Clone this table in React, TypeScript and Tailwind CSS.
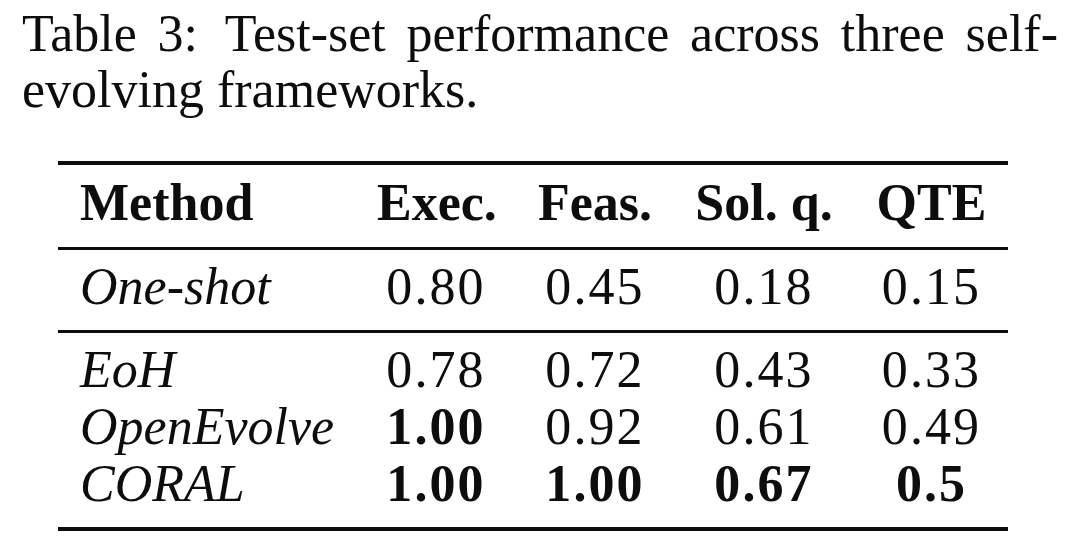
const serif = "font-['Liberation_Serif','Times_New_Roman',serif]"

type Cell = { v: string; b?: boolean }
type Row = { name: string; cells: Cell[] }

const baseline: Row[] = [
  { name: 'One-shot', cells: [{ v: '0.80' }, { v: '0.45' }, { v: '0.18' }, { v: '0.15' }] },
]

const evolving: Row[] = [
  { name: 'EoH', cells: [{ v: '0.78' }, { v: '0.72' }, { v: '0.43' }, { v: '0.33' }] },
  { name: 'OpenEvolve', cells: [{ v: '1.00', b: true }, { v: '0.92' }, { v: '0.61' }, { v: '0.49' }] },
  { name: 'CORAL', cells: [{ v: '1.00', b: true }, { v: '1.00', b: true }, { v: '0.67', b: true }, { v: '0.5', b: true }] },
]

const grid = 'grid grid-cols-[256px_118px_118px_138px_115px] gap-x-[41px] pl-[22px] pr-[19px]'

function DataRow({ row }: { row: Row }) {
  return (
    <div className={`${grid} h-[57px] leading-[57px]`}>
      <div className="italic">{row.name}</div>
      {row.cells.map((c, i) => (
        <div key={i} className={`text-center tracking-[0.04em] ${c.b ? 'font-bold' : ''}`}>
          {c.v}
        </div>
      ))}
    </div>
  )
}

export default function App() {
  return (
    <div className={`w-[1080px] h-[552px] bg-white text-[#0d0d0d] overflow-hidden ${serif} text-[52px]`}>
      {/* caption */}
      <div className="pt-[6px] pl-[22px] w-[1058px] leading-[56px]">
        <div className="text-justify [text-align-last:justify] whitespace-nowrap flex justify-between">
          <span>Table</span>
          <span>3:</span>
          <span className="ml-[6px]">Test-set</span>
          <span>performance</span>
          <span>across</span>
          <span>three</span>
          <span>self-</span>
        </div>
        <div>evolving frameworks.</div>
      </div>

      {/* table */}
      <div className="mt-[43px] ml-[58px] w-[950px]">
        <div className="h-[4px] bg-[#0d0d0d]" />
        <div className={`${grid} h-[57px] leading-[57px] font-bold mt-[9px] mb-[16px]`}>
          <div>Method</div>
          <div className="text-center">Exec.</div>
          <div className="text-center">Feas.</div>
          <div className="text-center">Sol. q.</div>
          <div className="text-center">QTE</div>
        </div>
        <div className="h-[3px] bg-[#0d0d0d]" />
        <div className="pt-[8px] pb-[15px]">
          {baseline.map((r) => (
            <DataRow key={r.name} row={r} />
          ))}
        </div>
        <div className="h-[3px] bg-[#0d0d0d]" />
        <div className="pt-[8px] pb-[15px]">
          {evolving.map((r) => (
            <DataRow key={r.name} row={r} />
          ))}
        </div>
        <div className="h-[4px] bg-[#0d0d0d]" />
      </div>
    </div>
  )
}
